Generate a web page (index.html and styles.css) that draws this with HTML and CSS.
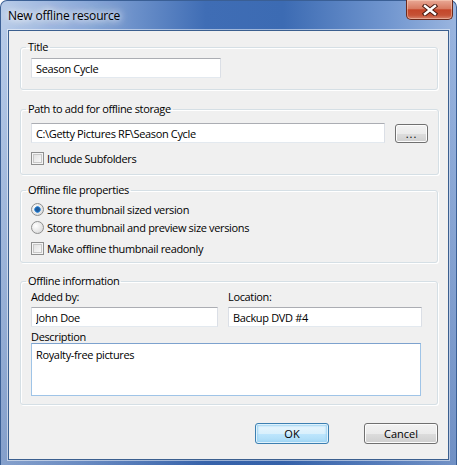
FILE: index.html
```html
<!DOCTYPE html>
<html lang="en">
<head>
    <meta charset="UTF-8">
    <meta name="viewport" content="width=device-width, initial-scale=1.0">
    <title>New offline resource</title>
    <link rel="stylesheet" href="styles.css">
</head>
<body>
    <div class="window">
        <div class="titlebar">
            <span class="caption">New offline resource</span>
            <button class="close" type="button" title="Close">
                <svg width="16" height="12" viewBox="0 0 16 12">
                    <path d="M3 2 L13 10 M13 2 L3 10" stroke="#4a1a10" stroke-width="4.4" stroke-linecap="square" fill="none"/>
                    <path d="M3 2 L13 10 M13 2 L3 10" stroke="#ffffff" stroke-width="2.4" stroke-linecap="square" fill="none"/>
                </svg>
            </button>
        </div>

        <form class="client" id="resourceForm">
            <fieldset class="group group-title">
                <legend>Title</legend>
                <input type="text" class="textbox title-input" value="Season Cycle">
            </fieldset>

            <fieldset class="group group-path">
                <legend>Path to add for offline storage</legend>
                <div class="path-row">
                    <input type="text" class="textbox path-input" value="C:\Getty Pictures RF\Season Cycle">
                    <button type="button" class="btn browse">...</button>
                </div>
                <label class="check-row">
                    <span class="checkbox"></span>
                    Include Subfolders
                </label>
            </fieldset>

            <fieldset class="group group-props">
                <legend>Offline file properties</legend>
                <label class="check-row">
                    <span class="radio checked"></span>
                    Store thumbnail sized version
                </label>
                <label class="check-row">
                    <span class="radio"></span>
                    Store thumbnail and preview size versions
                </label>
                <label class="check-row readonly-row">
                    <span class="checkbox"></span>
                    Make offline thumbnail readonly
                </label>
            </fieldset>

            <fieldset class="group group-info">
                <legend>Offline information</legend>
                <div class="info-grid">
                    <div class="field">
                        <span class="field-label">Added by:</span>
                        <input type="text" class="textbox" value="John Doe">
                    </div>
                    <div class="field field-right">
                        <span class="field-label">Location:</span>
                        <input type="text" class="textbox" value="Backup DVD #4">
                    </div>
                    <div class="field field-wide">
                        <span class="field-label">Description</span>
                        <textarea class="textbox memo">Royalty-free pictures</textarea>
                    </div>
                </div>
            </fieldset>

            <div class="buttons">
                <button type="submit" class="btn default">OK</button>
                <button type="button" class="btn">Cancel</button>
            </div>
        </form>
    </div>
</body>
</html>
```

FILE: styles.css
```css
body {
    margin: 0;
    padding: 0;
    background: #ffffff;
    font-family: "Open Sans", "Noto Sans", sans-serif;
    font-size: 11px;
    letter-spacing: -0.35px;
    color: #000000;
}
.window {
    width: 457px;
    height: 465px;
    box-sizing: border-box;
    padding: 0 7px 5px 7px;
    border-radius: 7px 7px 0 0;
    border: 1px solid #3a5f95;
    border-bottom: none;
    background:
        linear-gradient(to bottom, rgba(255,255,255,0) 0, rgba(255,255,255,0) 30px, rgba(40,80,150,0.35) 100%),
        linear-gradient(to right, #b7cbe8 0%, #8caad9 18%, #3f6db5 45%, #3c6bb3 62%, #7196cf 85%, #9ab5df 100%);
    display: flex;
    flex-direction: column;
}
.titlebar {
    height: 29px;
    display: flex;
    justify-content: space-between;
    align-items: flex-start;
}
.caption {
    margin-top: 6px;
    font-size: 12px;
    letter-spacing: -0.2px;
    color: #000000;
    text-shadow: 0 0 6px #ffffff, 0 0 10px rgba(255,255,255,0.9), 0 0 16px rgba(255,255,255,0.8);
}
.close {
    width: 47px;
    height: 20px;
    margin: -1px -4px 0 0;
    padding: 0;
    border: 1px solid #6b2a1c;
    border-top: none;
    border-radius: 0 0 5px 5px;
    background: linear-gradient(to bottom, #e9a996 0%, #d87b62 45%, #c4462a 52%, #c65236 80%, #d6826c 100%);
    box-shadow: inset 0 0 0 1px rgba(255,220,200,0.45);
    display: flex;
    align-items: center;
    justify-content: center;
}
.client {
    flex: 1;
    margin: 0;
    background: #f0f0f0;
    border: 1px solid #3b5f8f;
    padding: 9px 10px 0 11px;
    display: flex;
    flex-direction: column;
    box-shadow: 0 0 0 1px rgba(255,255,255,0.5);
}
.group {
    margin: 0;
    padding: 0 10px 0 10px;
    border: 1px solid #d5dfe5;
    border-radius: 3px;
    box-shadow: inset 1px 1px 0 #ffffff, 1px 1px 0 #ffffff;
}
.group legend {
    padding: 0 2px;
    margin-left: -5px;
    line-height: 14px;
    color: #000000;
}
.group-title {
    padding-top: 4px;
    padding-bottom: 11px;
}
.group-path {
    margin-top: 12px;
    padding-top: 7px;
    padding-bottom: 7px;
}
.group-props {
    margin-top: 8px;
    padding-top: 3px;
    padding-bottom: 5px;
}
.group-info {
    margin-top: 11px;
    padding-top: 1px;
    padding-bottom: 8px;
}
.textbox {
    box-sizing: border-box;
    height: 20px;
    padding: 0 4px;
    margin: 0;
    font-family: inherit;
    font-size: 11px;
    letter-spacing: -0.35px;
    color: #000000;
    background: #ffffff;
    border: 1px solid #e2e3ea;
    border-top-color: #abadb3;
    border-left-color: #dbdfe6;
    border-right-color: #dbdfe6;
    border-bottom-color: #e3e9ef;
    outline: none;
}
.title-input {
    width: 190px;
}
.path-row {
    display: flex;
    align-items: flex-start;
    gap: 10px;
}
.path-input {
    width: 354px;
}
.check-row {
    display: flex;
    align-items: center;
    gap: 3px;
    height: 18px;
}
.group-path .check-row {
    margin-top: 6px;
}
.readonly-row {
    margin-top: 3px;
}
.checkbox {
    width: 13px;
    height: 13px;
    box-sizing: border-box;
    border: 1px solid #8e8f8f;
    background: #f4f4f4;
    box-shadow: inset 0 0 0 1px #f4f4f4, inset 0 0 0 2px #c8c8c8;
    background-image: linear-gradient(135deg, #dcdcdc 0%, #fefefe 100%);
}
.radio {
    width: 13px;
    height: 13px;
    box-sizing: border-box;
    border-radius: 50%;
    border: 1px solid #8e8f8f;
    background: radial-gradient(circle at 35% 35%, #ffffff 0%, #e4e4e4 60%, #cfcfcf 100%);
}
.radio.checked {
    background:
        radial-gradient(circle at 50% 50%, #2a5b92 0, #1a5fa8 2px, #4d9be0 3px, rgba(77,155,224,0) 3.6px),
        radial-gradient(circle at 35% 35%, #ffffff 0%, #e4e4e4 60%, #cfcfcf 100%);
}
.info-grid {
    display: grid;
    grid-template-columns: 187px 194px;
    column-gap: 10px;
}
.field {
    display: flex;
    flex-direction: column;
}
.field .textbox {
    width: 100%;
}
.field-label {
    line-height: 15px;
    height: 16px;
    margin-bottom: 2px;
}
.field-wide {
    grid-column: 1 / 3;
    margin-top: 2px;
}
.field-wide .field-label {
    height: 14px;
    margin-bottom: 0;
}
.field-wide .memo {
    width: 390px;
    height: 53px;
    resize: none;
    padding: 3px 4px;
    border: 1px solid #9fc4e7;
    border-top-color: #7da2ce;
}
.buttons {
    display: flex;
    justify-content: flex-end;
    gap: 35px;
    margin-top: 18px;
}
.btn {
    width: 74px;
    height: 21px;
    box-sizing: border-box;
    padding: 0;
    font-family: inherit;
    font-size: 11px;
    color: #000000;
    border: 1px solid #707070;
    border-radius: 3px;
    background: linear-gradient(to bottom, #f2f2f2 0%, #ebebeb 50%, #dddddd 51%, #cfcfcf 100%);
    box-shadow: inset 0 0 0 1px #fcfcfc;
}
.btn.default {
    border-color: #3c7fb1;
    background: linear-gradient(to bottom, #eaf6fd 0%, #d9f0fc 50%, #bee6fd 51%, #a7d9f5 100%);
    box-shadow: inset 0 0 0 1px #dff2fc, inset 0 0 2px 2px #9ed3f3;
}
.btn.browse {
    width: 33px;
    height: 19px;
    margin-top: 1px;
    line-height: 10px;
    letter-spacing: 1px;
}
```
